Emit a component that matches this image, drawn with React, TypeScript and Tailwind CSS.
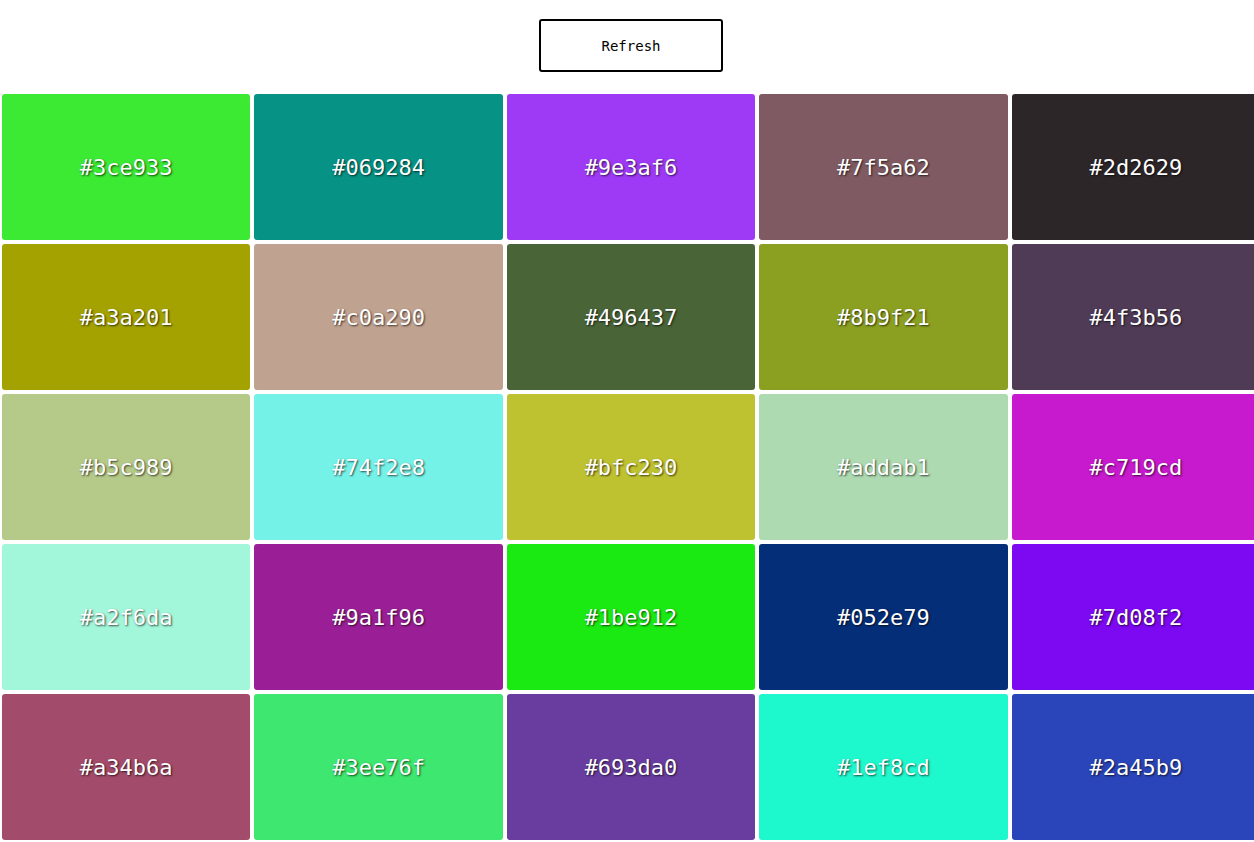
import { useState } from "react";

const initialColors = [
  "#3ce933", "#069284", "#9e3af6", "#7f5a62", "#2d2629",
  "#a3a201", "#c0a290", "#496437", "#8b9f21", "#4f3b56",
  "#b5c989", "#74f2e8", "#bfc230", "#addab1", "#c719cd",
  "#a2f6da", "#9a1f96", "#1be912", "#052e79", "#7d08f2",
  "#a34b6a", "#3ee76f", "#693da0", "#1ef8cd", "#2a45b9",
];

const randomHex = () =>
  "#" + Math.floor(Math.random() * 0xffffff).toString(16).padStart(6, "0");

export default function App() {
  const [colors, setColors] = useState<string[]>(initialColors);

  return (
    <div className="w-full overflow-hidden bg-white">
      <div className="w-[1262px] flex flex-col items-center pt-[19px] font-['DejaVu_Sans_Mono',monospace]">
        {/* Refresh button */}
        <button
          onClick={() => setColors(colors.map(() => randomHex()))}
          className="w-[184px] h-[53px] pt-[2px] border-2 border-black rounded-[3px] bg-white text-[14px] text-black"
        >
          Refresh
        </button>

        {/* Swatch grid */}
        <div className="mt-[20px] grid grid-cols-5 w-full">
          {colors.map((c, i) => (
            <div
              key={i}
              className="m-[2px] h-[146px] rounded-[3px] flex items-center justify-center"
              style={{ backgroundColor: c }}
            >
              <span className="text-white text-[22px] [text-shadow:1px_1px_2px_rgba(0,0,0,0.7)]">
                {c}
              </span>
            </div>
          ))}
        </div>
      </div>
    </div>
  );
}
